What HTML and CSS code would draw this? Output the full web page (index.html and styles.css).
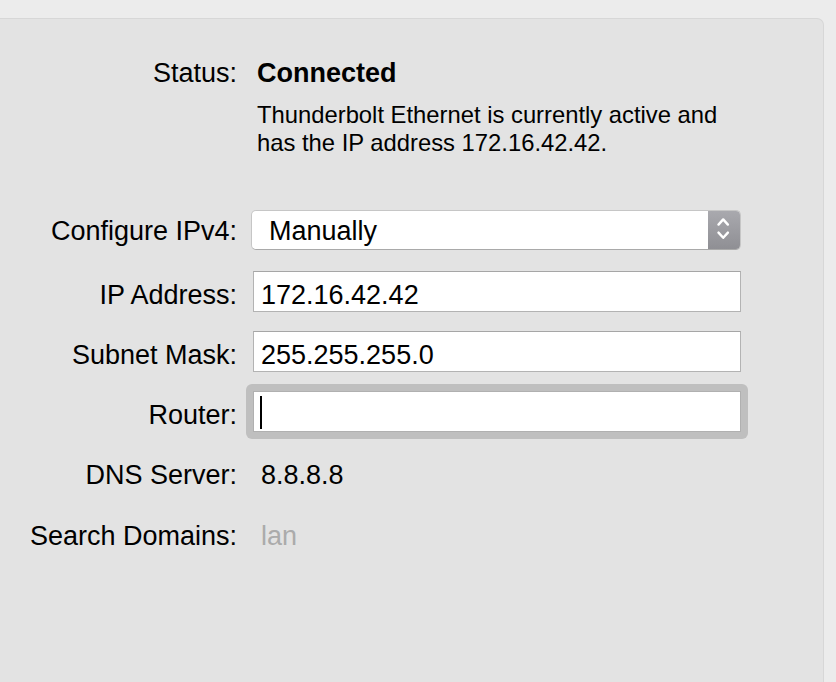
FILE: index.html
```html
<!DOCTYPE html>
<html lang="en">
<head>
<meta charset="utf-8">
<title>Network – Thunderbolt Ethernet</title>
<link rel="stylesheet" href="styles.css">
</head>
<body>
<div class="panel">
  <div class="row status-row">
    <div class="label">Status:</div>
    <div class="status-value">
      <div class="status-title">Connected</div>
      <p class="status-desc">Thunderbolt Ethernet is currently active and<br>has the IP address 172.16.42.42.</p>
    </div>
  </div>

  <div class="row popup-row">
    <div class="label">Configure IPv4:</div>
    <div class="popup">
      <span class="popup-text">Manually</span>
      <span class="stepper">
        <svg width="32" height="38" viewBox="0 0 32 38">
          <polyline points="10.5,13.6 15.2,8.4 19.9,13.6" fill="none" stroke="#fff" stroke-width="2.4" stroke-linecap="round" stroke-linejoin="round"/>
          <polyline points="10.5,21.6 15.2,26.8 19.9,21.6" fill="none" stroke="#fff" stroke-width="2.4" stroke-linecap="round" stroke-linejoin="round"/>
        </svg>
      </span>
    </div>
  </div>

  <div class="row field-row first-field">
    <div class="label">IP Address:</div>
    <div class="field">172.16.42.42</div>
  </div>

  <div class="row field-row">
    <div class="label">Subnet Mask:</div>
    <div class="field">255.255.255.0</div>
  </div>

  <div class="row field-row">
    <div class="label">Router:</div>
    <div class="focus-ring">
      <div class="field"><span class="caret"></span></div>
    </div>
  </div>

  <div class="row info-row dns-row">
    <div class="label">DNS Server:</div>
    <div class="info-value">8.8.8.8</div>
  </div>

  <div class="row info-row search-row">
    <div class="label">Search Domains:</div>
    <div class="info-value placeholder">lan</div>
  </div>
</div>
</body>
</html>
```

FILE: styles.css
```css
html, body {
  margin: 0;
  padding: 0;
  background: #ececec;
  height: 100%;
  overflow: hidden;
}

body {
  font-family: "Liberation Sans", Arial, Helvetica, sans-serif;
  color: #000;
}

.panel {
  box-sizing: border-box;
  margin-top: 18px;
  width: 824px;
  min-height: 664px;
  background: #e3e3e3;
  border-top: 1px solid #d7d7d7;
  border-right: 1px solid #d7d7d7;
  border-top-right-radius: 7px;
  padding-top: 39px;
}

.row {
  display: flex;
  align-items: baseline;
  column-gap: 16px;
}

.label {
  flex: none;
  width: 237px;
  text-align: right;
  font-size: 27px;
  line-height: 30px;
  white-space: nowrap;
}

/* Status */
.status-value {
  padding-left: 4px;
}

.status-title {
  font-size: 27px;
  line-height: 30px;
  font-weight: bold;
}

.status-desc {
  margin: 13px 0 0;
  font-size: 23.8px;
  line-height: 28px;
}

/* Configure popup */
.popup-row {
  margin-top: 53px;
}

.popup {
  box-sizing: border-box;
  display: flex;
  width: 490px;
  height: 40px;
  margin-left: -2px;
  background: #fff;
  border: 1px solid #c6c6c6;
  border-bottom-color: #a9a9a9;
  border-radius: 5px;
  overflow: hidden;
  padding-top: 2px;
}

.popup-text {
  flex: 1;
  padding-left: 17px;
  font-size: 27px;
  line-height: 36px;
}

.stepper {
  flex: none;
  width: 32px;
  height: 38px;
  margin-top: -2px;
  background: linear-gradient(#a9a9ae, #8f8f94);
}

.stepper svg {
  display: block;
}

/* Text fields */
.field-row {
  margin-top: 19px;
}

.first-field {
  margin-top: 21px;
}

.field {
  box-sizing: border-box;
  width: 488px;
  height: 41px;
  background: #fff;
  border: 1px solid #b3b3b3;
  border-top-color: #a6a6a6;
  padding: 8px 7px 1px;
  font-size: 27px;
  line-height: 30px;
  white-space: nowrap;
}

.focus-ring {
  flex: none;
  margin: -7px;
  padding: 7px;
  background: #bfbfbf;
  border-radius: 6px;
}

.focus-ring .field {
  border-color: #b0b0b0;
}

.caret {
  display: inline-block;
  width: 2px;
  height: 33px;
  margin-top: -4px;
  margin-left: -1px;
  vertical-align: -5px;
  background: #000;
}

/* Static info rows */
.dns-row {
  margin-top: 28px;
}

.search-row {
  margin-top: 31px;
}

.info-value {
  padding-left: 8px;
  font-size: 27px;
  line-height: 30px;
}

.placeholder {
  color: #ababab;
}
```
